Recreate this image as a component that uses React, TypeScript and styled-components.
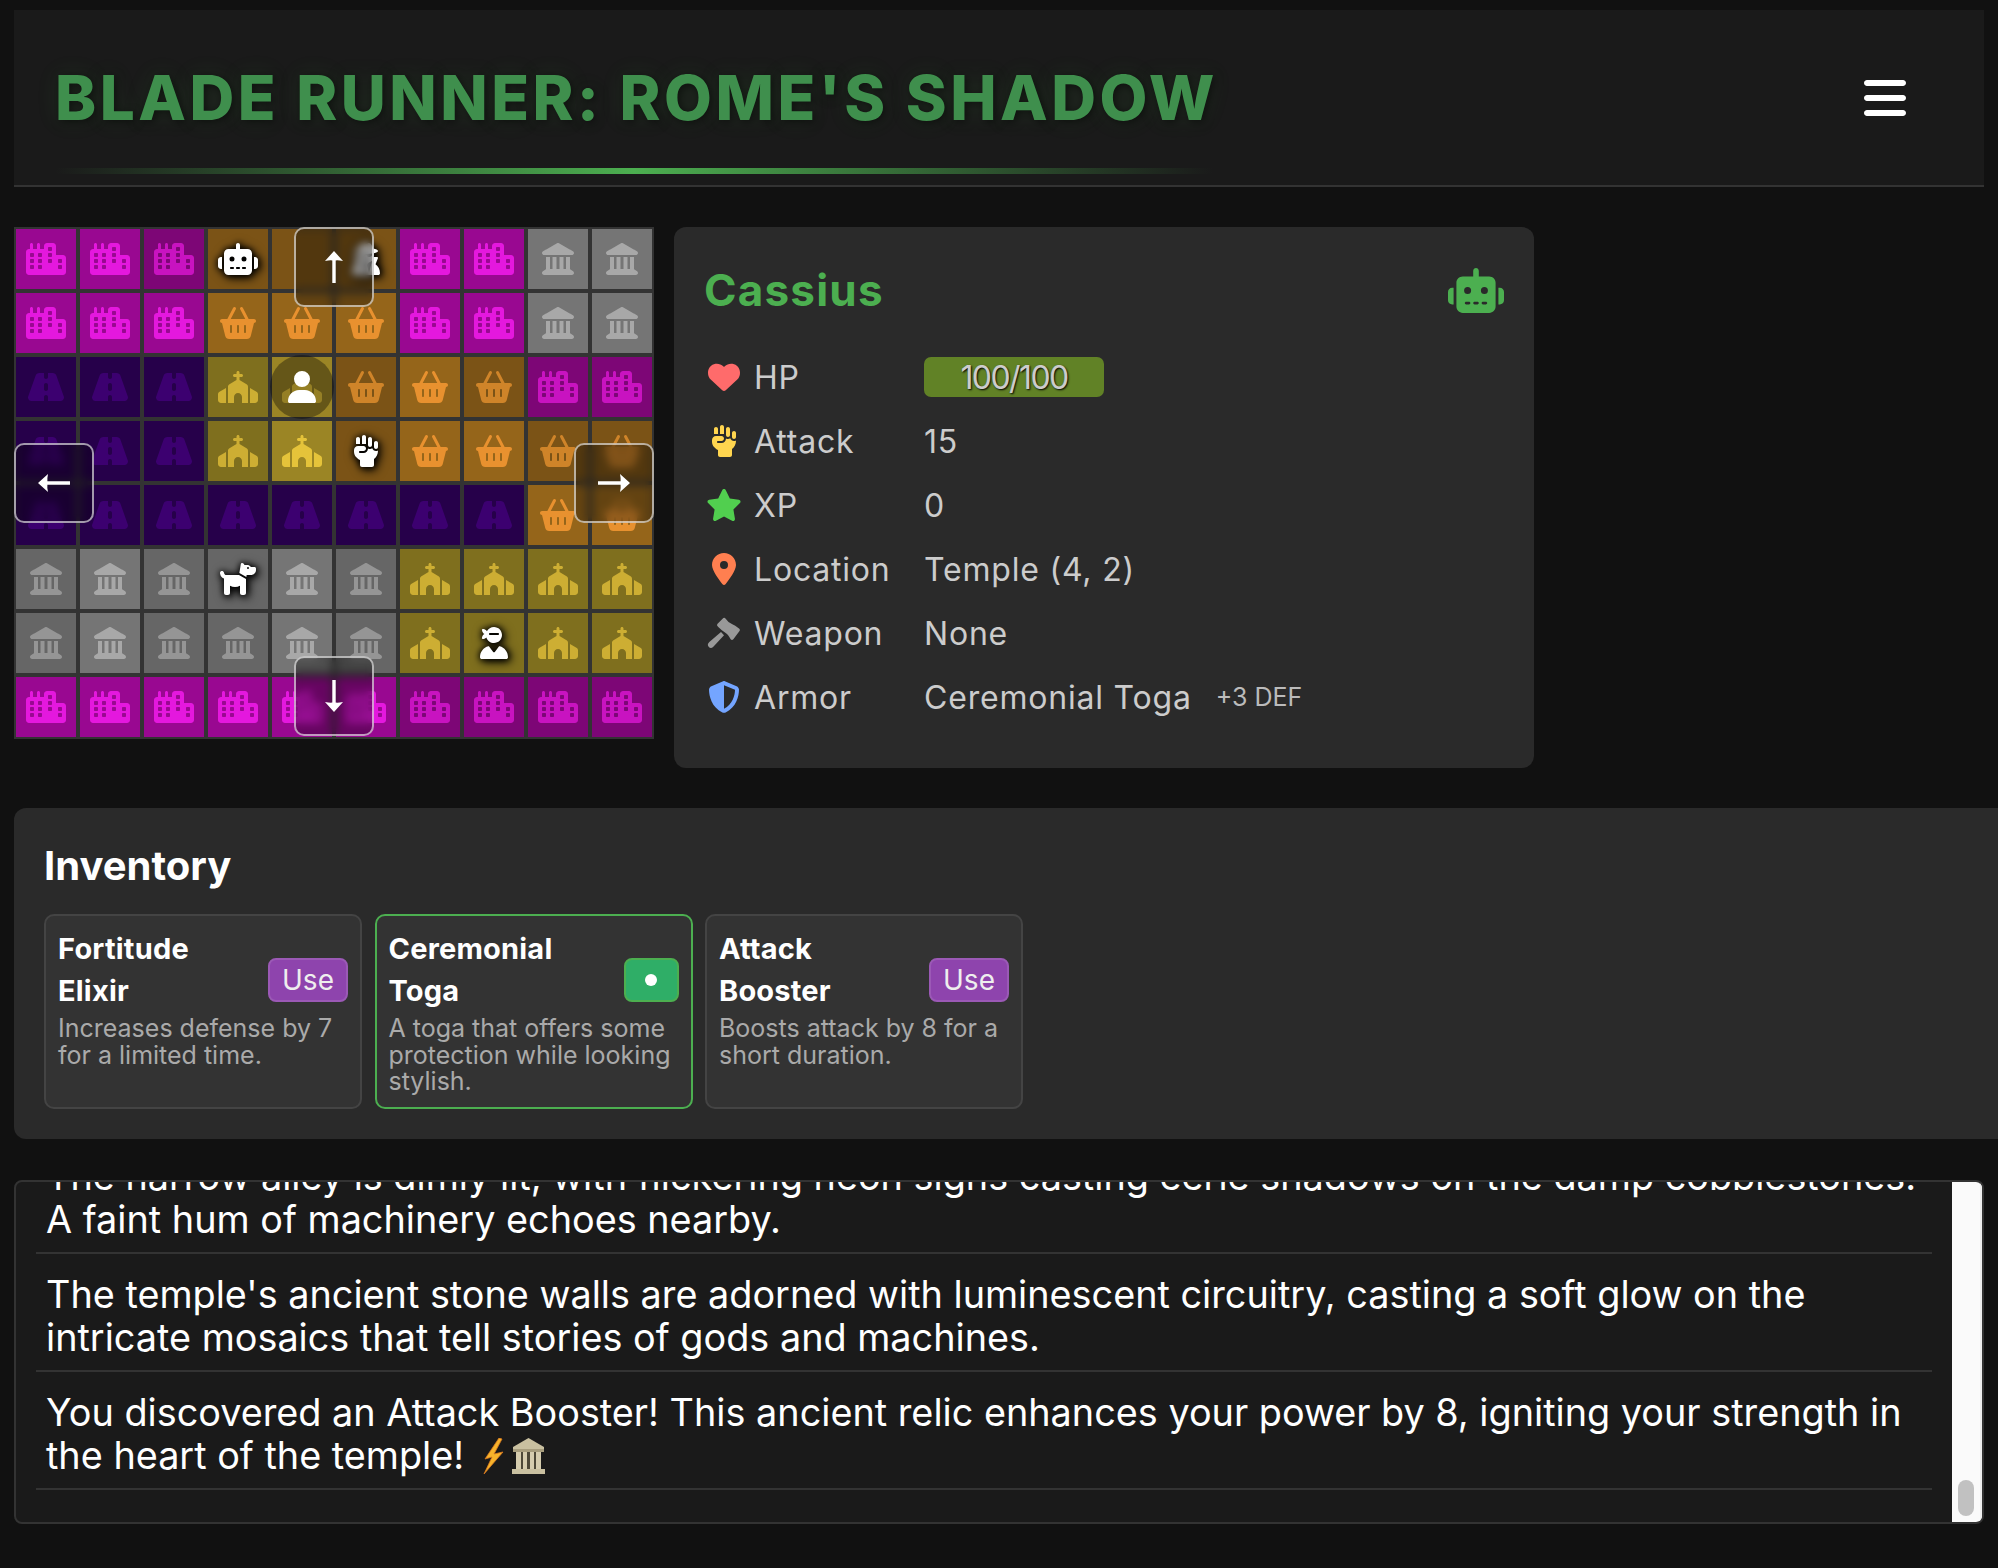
import React from 'react';
import styled, { createGlobalStyle } from 'styled-components';
import {
  FaBars,
  FaBasketShopping,
  FaChurch,
  FaCity,
  FaDog,
  FaHandFist,
  FaHeart,
  FaLandmark,
  FaLocationDot,
  FaRoad,
  FaRobot,
  FaShieldHalved,
  FaStar,
  FaUser,
  FaUserNinja,
  FaUserSecret,
} from 'react-icons/fa6';

const GlobalStyle = createGlobalStyle`
  html, body {
    margin: 0;
    height: 100%;
    overflow: hidden;
    background: #111;
  }
  body {
    font-family: Inter, "Noto Sans", sans-serif;
    color: #fff;
  }
  * { box-sizing: border-box; }
`;

type Kind = 'c' | 'm' | 'r' | 'h' | 'l';

const tileColors: Record<Kind, { bg: string; icon: string; litBg: string; litIcon: string }> = {
  c: { bg: '#7d0676', icon: '#c813c0', litBg: '#990891', litIcon: '#e418de' },
  m: { bg: '#7b5316', icon: '#cf8429', litBg: '#95651a', litIcon: '#e8912f' },
  r: { bg: '#26004a', icon: '#3c0070', litBg: '#26004a', litIcon: '#3c0070' },
  h: { bg: '#7f6f1e', icon: '#cdae33', litBg: '#9b8525', litIcon: '#e5c33a' },
  l: { bg: '#666666', icon: '#959595', litBg: '#757575', litIcon: '#a8a8a8' },
};

const tileIcons = { c: FaCity, m: FaBasketShopping, r: FaRoad, h: FaChurch, l: FaLandmark };

// uppercase = lit tile, lowercase = dim tile
const mapRows = [
  'CCcmmmCCLL',
  'CCCMMMCCLL',
  'rrrhHmMmcc',
  'rrrhHmMMmm',
  'rrrrrrrrMM',
  'lLllLlhhhh',
  'lLllLlhhhh',
  'CCCCCCcccc',
];

const entities: Record<string, React.ComponentType> = {
  '0-3': FaRobot,
  '0-5': FaUserSecret,
  '3-5': FaHandFist,
  '5-3': FaDog,
  '6-7': FaUserNinja,
};

// the tile under the up button shows nothing
const emptyTiles = ['0-4'];

const PageWrap = styled.div`
  padding: 10px 14px;
  height: 1568px;
`;

const Header = styled.header`
  height: 177px;
  display: flex;
  align-items: center;
  justify-content: space-between;
  padding: 0 78px 0 41px;
  background: #1a1a1a;
  border-bottom: 2px solid #333;
`;

const Title = styled.h1`
  position: relative;
  margin: 0;
  width: 1158px;
  font-size: 62px;
  font-weight: 800;
  letter-spacing: 3.5px;
  line-height: 80px;
  text-transform: uppercase;
  white-space: nowrap;
  color: #3f8f4d;
  text-shadow: 2px 2px 8px rgba(0, 0, 0, 0.5), 0 0 22px rgba(76, 175, 80, 0.14);

  &::after {
    content: '';
    position: absolute;
    left: 0;
    right: 0;
    bottom: -36px;
    height: 6px;
    background: linear-gradient(90deg, transparent, #4caf50, transparent);
  }
`;

const MenuIcon = styled(FaBars)`
  width: 42px;
  height: 48px;
  color: #fff;
`;

const GameRow = styled.section`
  display: flex;
  align-items: flex-start;
  gap: 20px;
  margin-top: 40px;
`;

const MapWrap = styled.div`
  position: relative;
  width: 640px;
  height: 512px;
  flex: none;
`;

const MapGrid = styled.div`
  display: grid;
  grid-template-columns: repeat(10, 60px);
  grid-auto-rows: 60px;
  gap: 4px;
  padding: 2px;
  background: #333;
`;

const Tile = styled.div<{ $kind: Kind; $lit: boolean }>`
  position: relative;
  display: flex;
  align-items: center;
  justify-content: center;
  background: ${(p) => (p.$lit ? tileColors[p.$kind].litBg : tileColors[p.$kind].bg)};
  color: ${(p) => (p.$lit ? tileColors[p.$kind].litIcon : tileColors[p.$kind].icon)};

  svg {
    width: 40px;
    height: 32px;
  }
`;

const EntityIcon = styled.span`
  display: flex;
  color: #fff;
  filter: drop-shadow(0 0 3px #000) drop-shadow(2px 2px 4px #000);
`;

const PlayerMarker = styled.div`
  position: absolute;
  left: -2px;
  top: -2px;
  width: 64px;
  height: 64px;
  display: flex;
  align-items: center;
  justify-content: center;
  border-radius: 50%;
  background: rgba(0, 0, 0, 0.35);
  color: #fff;
`;

const NavButton = styled.button<{ $side: 'up' | 'down' | 'left' | 'right' }>`
  position: absolute;
  width: 80px;
  height: 80px;
  padding: 0;
  display: flex;
  align-items: center;
  justify-content: center;
  border: 2px solid rgba(255, 255, 255, 0.6);
  border-radius: 10px;
  background: rgba(0, 0, 0, 0.33);
  backdrop-filter: blur(4px);
  ${(p) => p.$side === 'up' && 'top: 0; left: 280px;'}
  ${(p) => p.$side === 'down' && 'bottom: 3px; left: 280px;'}
  ${(p) => p.$side === 'left' && 'left: 0; top: 216px;'}
  ${(p) => p.$side === 'right' && 'right: 0; top: 216px;'}
`;

const ArrowIcon = ({ angle }: { angle: number }) => (
  <svg width="34" height="34" viewBox="0 0 34 34" style={{ transform: `rotate(${angle}deg)` }}>
    <path d="M17 1 L26 11 Q21 10 18.7 10.4 L18.7 33 L15.3 33 L15.3 10.4 Q13 10 8 11 Z" fill="#fff" />
  </svg>
);

const MalletIcon = () => (
  <svg viewBox="12 23 120 96" fill="currentColor">
    <path d="M52 44 L70 26 Q74 24 77 28 Q85 40 97 45 Q104 48 118 58 Q122 62 118 66 L100 90 Q96 94 92 90 Q84 74 76 70 Q66 64 54 52 Q49 48 52 44 Z" />
    <path d="M63 68 L72 78 L40 112 Q32 120 26 112 Q20 106 28 98 Z" />
  </svg>
);

const StatsPanel = styled.aside`
  width: 860px;
  height: 541px;
  padding: 30px;
  background: #2a2a2a;
  border-radius: 12px;
`;

const StatsHeader = styled.div`
  display: flex;
  align-items: center;
  justify-content: space-between;
  height: 66px;
  margin-bottom: 34px;
`;

const HeroName = styled.h2`
  margin: 0;
  font-size: 44px;
  font-weight: 700;
  letter-spacing: 1.2px;
  color: #4caf50;
`;

const HeroIcon = styled(FaRobot)`
  width: 56px;
  height: 45px;
  color: #4caf50;
`;

const StatRow = styled.div`
  display: flex;
  align-items: center;
  height: 40px;
  margin-bottom: 24px;
  font-size: 32px;
  letter-spacing: 0.8px;
  color: #ccc;
`;

const StatIcon = styled.span<{ $color: string }>`
  display: flex;
  justify-content: center;
  width: 40px;
  margin-right: 10px;
  color: ${(p) => p.$color};

  svg {
    width: 40px;
    height: 32px;
  }
`;

const StatLabel = styled.span`
  width: 170px;
`;

const HealthBar = styled.div`
  width: 180px;
  height: 40px;
  display: flex;
  align-items: center;
  justify-content: center;
  border-radius: 7px;
  background: #618226;
  letter-spacing: -1.6px;
  text-shadow: 1px 1px 2px #000;
`;

const StatNote = styled.span`
  margin-left: 24px;
  font-size: 25px;
  letter-spacing: 0;
  color: #bbb;
`;

const InventoryPanel = styled.section`
  height: 331px;
  margin: 40px -40px 0 0;
  padding: 30px;
  background: #2a2a2a;
  border-radius: 12px;
`;

const InventoryTitle = styled.h3`
  margin: 0 0 28px;
  height: 48px;
  font-size: 40px;
  line-height: 56px;
  font-weight: 700;
  color: #fff;
`;

const ItemList = styled.div`
  display: flex;
  gap: 12.5px;
`;

const ItemCard = styled.article<{ $active?: boolean }>`
  width: 318px;
  height: 195px;
  padding: 12px;
  background: #333;
  border: 2px solid ${(p) => (p.$active ? '#4caf50' : '#444')};
  border-radius: 10px;
`;

const ItemHead = styled.div`
  display: flex;
  align-items: flex-start;
  justify-content: space-between;
  margin-bottom: 3px;
`;

const ItemName = styled.div`
  max-width: 190px;
  font-size: 29px;
  letter-spacing: 0.2px;
  line-height: 42px;
  font-weight: 700;
  color: #fff;
`;

const UseButton = styled.button<{ $equipped?: boolean }>`
  height: 44px;
  width: ${(p) => (p.$equipped ? '55px' : '80px')};
  margin-top: 30px;
  padding: 0;
  display: flex;
  align-items: center;
  justify-content: center;
  font-family: inherit;
  font-size: 28px;
  color: #eee;
  border-radius: 8px;
  background: ${(p) => (p.$equipped ? '#2fae67' : '#8e44ad')};
  border: 2px solid ${(p) => (p.$equipped ? '#4caf50' : '#9b59b6')};
`;

const EquippedDot = styled.span`
  width: 12px;
  height: 12px;
  border-radius: 50%;
  background: #fff;
`;

const ItemText = styled.p`
  margin: 0;
  font-size: 25px;
  line-height: 26.5px;
  color: #aaa;
`;

const LogFrame = styled.section`
  display: flex;
  height: 344px;
  margin-top: 41px;
  background: #1a1a1a;
  border: 2px solid #333;
  border-radius: 8px;
  overflow: hidden;
`;

const LogBody = styled.div`
  flex: 1;
  display: flex;
  flex-direction: column;
  justify-content: flex-end;
  padding: 0 20px 32px;
  overflow: hidden;
`;

const LogEntry = styled.div`
  flex: none;
  padding: 19px 10px 11px;
  border-bottom: 2px solid #333;
  font-size: 37.8px;
  line-height: 43px;
  color: #fff;
`;

const ScrollTrack = styled.div`
  flex: none;
  width: 30px;
  display: flex;
  justify-content: center;
  align-items: flex-end;
  padding-bottom: 6px;
  background: #fafafa;
  border-right: 2px solid #eee;
`;

const ScrollThumb = styled.div`
  width: 16px;
  height: 36px;
  border-radius: 8px;
  background: #c1c1c1;
`;

const EmojiIcons = styled.span`
  display: inline-flex;
  gap: 4px;
  margin-left: 16px;
  vertical-align: -5px;
`;

const BoltEmoji = () => (
  <svg width="26" height="36" viewBox="0 0 26 36">
    <path d="M19 0 L5 21 L12 19 L4 36 L23 14 L14 16 L22 1 Z" fill="#f7b32b" stroke="#d9781f" strokeWidth="0.8" />
  </svg>
);

const TempleEmoji = () => (
  <svg width="37" height="36" viewBox="0 0 37 36">
    <path d="M18.5 0 L34 9 L34 11 L3 11 L3 9 Z" fill="#c9c0a0" />
    <rect x="3" y="11" width="31" height="3" fill="#a79d7d" />
    <path d="M6 14h5v17H6zM13 14h4v17h-4zM20 14h4v17h-4zM26 14h5v17h-5z" fill="#d5ccae" />
    <path d="M11 14h2v17h-2zM17 14h3v17h-3zM24 14h2v17h-2z" fill="#4d4838" />
    <rect x="2" y="31" width="33" height="5" fill="#c9c0a0" />
  </svg>
);

const stats = [
  { icon: FaHeart, color: '#ff6b6b', label: 'HP' },
  { icon: FaHandFist, color: '#ffd54f', label: 'Attack', value: '15' },
  { icon: FaStar, color: '#51cf4f', label: 'XP', value: '0' },
  { icon: FaLocationDot, color: '#ff7f50', label: 'Location', value: 'Temple (4, 2)' },
  { icon: MalletIcon, color: '#999', label: 'Weapon', value: 'None' },
  { icon: FaShieldHalved, color: '#74a5ff', label: 'Armor', value: 'Ceremonial Toga', note: '+3 DEF' },
];

const items = [
  { name: 'Fortitude Elixir', text: 'Increases defense by 7 for a limited time.' },
  { name: 'Ceremonial Toga', text: 'A toga that offers some protection while looking stylish.', equipped: true },
  { name: 'Attack Booster', text: 'Boosts attack by 8 for a short duration.' },
];

const App = () => {
  return (
    <PageWrap>
      <GlobalStyle />
      <Header>
        <Title>Blade Runner: Rome's Shadow</Title>
        <MenuIcon />
      </Header>

      <GameRow>
        <MapWrap>
          <MapGrid>
            {mapRows.map((row, r) =>
              row.split('').map((ch, c) => {
                const id = `${r}-${c}`;
                const kind = ch.toLowerCase() as Kind;
                const Base = tileIcons[kind];
                const Entity = entities[id];
                return (
                  <Tile key={id} $kind={kind} $lit={ch !== ch.toLowerCase()}>
                    {Entity ? (
                      <EntityIcon>
                        <Entity />
                      </EntityIcon>
                    ) : (
                      !emptyTiles.includes(id) && <Base />
                    )}
                    {r === 2 && c === 4 && (
                      <PlayerMarker>
                        <FaUser />
                      </PlayerMarker>
                    )}
                  </Tile>
                );
              })
            )}
          </MapGrid>
          <NavButton $side="up"><ArrowIcon angle={0} /></NavButton>
          <NavButton $side="left"><ArrowIcon angle={-90} /></NavButton>
          <NavButton $side="right"><ArrowIcon angle={90} /></NavButton>
          <NavButton $side="down"><ArrowIcon angle={180} /></NavButton>
        </MapWrap>

        <StatsPanel>
          <StatsHeader>
            <HeroName>Cassius</HeroName>
            <HeroIcon />
          </StatsHeader>
          {stats.map((s) => (
            <StatRow key={s.label}>
              <StatIcon $color={s.color}>
                <s.icon />
              </StatIcon>
              <StatLabel>{s.label}</StatLabel>
              {s.label === 'HP' ? <HealthBar>100/100</HealthBar> : <span>{s.value}</span>}
              {s.note && <StatNote>{s.note}</StatNote>}
            </StatRow>
          ))}
        </StatsPanel>
      </GameRow>

      <InventoryPanel>
        <InventoryTitle>Inventory</InventoryTitle>
        <ItemList>
          {items.map((item) => (
            <ItemCard key={item.name} $active={item.equipped}>
              <ItemHead>
                <ItemName>{item.name}</ItemName>
                <UseButton $equipped={item.equipped}>
                  {item.equipped ? <EquippedDot /> : 'Use'}
                </UseButton>
              </ItemHead>
              <ItemText>{item.text}</ItemText>
            </ItemCard>
          ))}
        </ItemList>
      </InventoryPanel>

      <LogFrame>
        <LogBody>
          <LogEntry>
            The narrow alley is dimly lit, with flickering neon signs casting eerie shadows on the damp cobblestones. A
            faint hum of machinery echoes nearby.
          </LogEntry>
          <LogEntry>
            The temple's ancient stone walls are adorned with luminescent circuitry, casting a soft glow on the intricate
            mosaics that tell stories of gods and machines.
          </LogEntry>
          <LogEntry>
            You discovered an Attack Booster! This ancient relic enhances your power by 8, igniting your strength in the
            heart of the temple!
            <EmojiIcons>
              <BoltEmoji />
              <TempleEmoji />
            </EmojiIcons>
          </LogEntry>
        </LogBody>
        <ScrollTrack>
          <ScrollThumb />
        </ScrollTrack>
      </LogFrame>
    </PageWrap>
  );
};

export default App;
